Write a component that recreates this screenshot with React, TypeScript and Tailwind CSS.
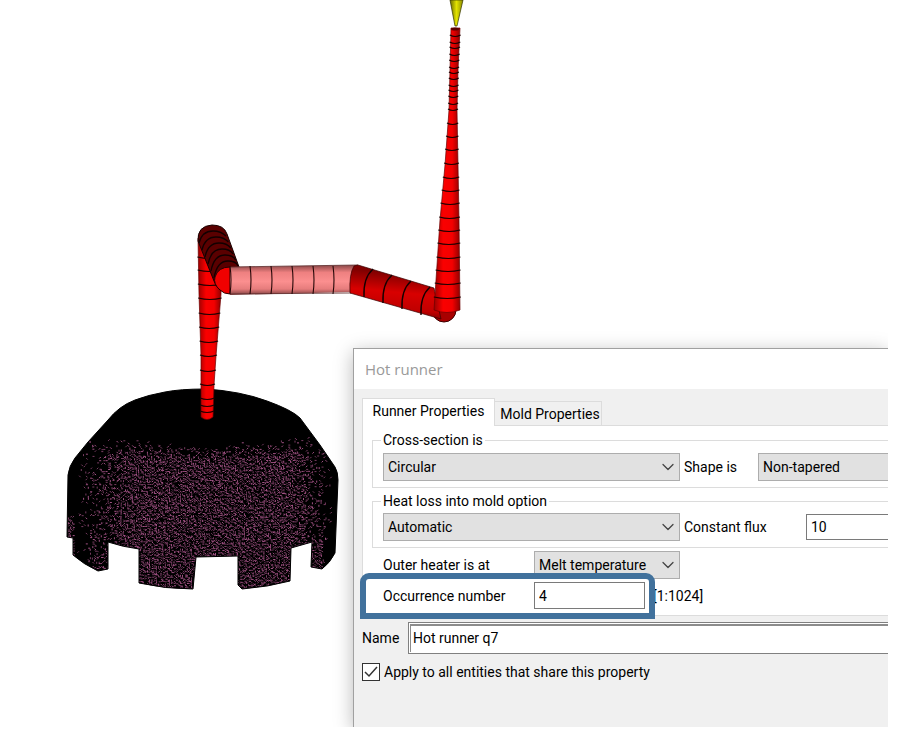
import React from "react";
import { FiChevronDown } from "react-icons/fi";

type Ring = [number, number, number];

// [y, left x, right x] of the outline, top to bottom
const sprueOutline: Ring[] = [
  [28, 451, 460],
  [70, 450, 458],
  [110, 449, 457],
  [165, 445, 458],
  [220, 440, 459],
  [310, 434, 460],
];
const sprueRings = [
  36, 43, 48, 55, 61, 68, 73, 79, 86, 91, 97, 104, 110, 124, 137, 150, 164, 178,
  191, 204, 218, 231, 244, 258, 271, 284, 298,
];

const dropOutline: Ring[] = [
  [238, 198, 221],
  [294, 199, 221],
  [356, 201, 216],
  [385, 201, 214],
  [417, 201, 213],
];
const dropRings = [
  258, 271, 285, 299, 314, 328, 342, 356, 371, 385, 399, 406, 412,
];

const edgesAt = (outline: Ring[], y: number) => {
  let i = 0;
  while (i < outline.length - 2 && y > outline[i + 1][0]) i++;
  const [y0, l0, r0] = outline[i];
  const [y1, l1, r1] = outline[i + 1];
  const t = (y - y0) / (y1 - y0);
  return [l0 + (l1 - l0) * t, r0 + (r1 - r0) * t];
};

const Pipe = ({ outline, rings }: { outline: Ring[]; rings: number[] }) => {
  const left = outline.map(([y, l]) => `${l},${y}`);
  const right = outline.map(([y, , r]) => `${r},${y}`).reverse();
  const [y, l, r] = outline[outline.length - 1];
  return (
    <g>
      <path
        d={`M${left.join(" L")} Q${(l + r) / 2},${y + 5} ${right.join(" L")}Z`}
        fill="url(#red)"
        stroke="#6b0000"
        strokeWidth="0.7"
      />
      {rings.map((ry) => {
        const [a, b] = edgesAt(outline, ry);
        return (
          <path
            key={ry}
            d={`M${a - 1},${ry - 1} Q${(a + b) / 2},${ry + 2} ${b + 1},${ry - 1}`}
            fill="none"
            stroke="#1c0000"
            strokeWidth="1.1"
          />
        );
      })}
    </g>
  );
};

const bodyPath =
  "M205,389 Q180,389 165,392 Q148,395 135,400 Q119,406 108,420 L88,442 L75,458 Q69,466 68,475 L67,537 L73,538 L73,555 Q83,564 98,571 L108,569 L108,542 Q123,547 139,549 L139,583 Q165,589 193,589 L196,557 L238,556 L238,585 L242,589 Q268,587 290,581 L291,548 L312,542 L311,567 L322,569 Q330,563 335,553 L338,480 Q338,472 335,467 L320,445 L300,418 Q292,410 267,401 Q240,391 205,389Z";

// Surface mesh: short strokes on a fine grid, thinning out to the rim
const buildMesh = () => {
  let seed = 7;
  const rand = () => {
    seed = (seed * 16807) % 2147483647;
    return seed / 2147483647;
  };
  const dirs = [
    [2, 0],
    [0, 2],
    [1.5, 1.5],
    [1.5, -1.5],
  ];
  let bright = "";
  let dim = "";
  for (let y = 436; y < 590; y += 2.2) {
    for (let x = 68; x < 337; x += 2.2) {
      const u = (x - 203) / 135;
      const top = 450 - 10 * Math.abs(u);
      let density = Math.min(1, (y - top + 6) / 18);
      const side = x < 203 ? (x - 74) / 56 : (332 - x) / 42;
      density *= Math.max(0, Math.min(1, side));
      if ((x < 73 && y > 517) || (x > 312 && x < 321 && y > 538)) density = 0.9;
      const roll = rand();
      const [dx, dy] = dirs[Math.floor(rand() * 4)];
      const jx = x + rand() * 0.6;
      const jy = y + rand() * 0.6;
      if (roll > density * 0.95) continue;
      const piece = `M${jx.toFixed(1)},${jy.toFixed(1)}l${dx},${dy}`;
      if (rand() < 0.45) bright += piece;
      else dim += piece;
    }
  }
  return { bright, dim };
};

const mesh = buildMesh();

const Model = () => (
  <svg
    className="absolute left-0 top-0"
    width="480"
    height="600"
    viewBox="0 0 480 600"
    role="img"
    aria-label="Runner system and meshed part"
  >
    <defs>
      <linearGradient id="red">
        <stop offset="0" stopColor="#980000" />
        <stop offset="0.35" stopColor="#fa0000" />
        <stop offset="0.7" stopColor="#f40000" />
        <stop offset="1" stopColor="#900000" />
      </linearGradient>
      <linearGradient id="pink" x2="0" y2="1">
        <stop offset="0" stopColor="#8b4848" />
        <stop offset="0.25" stopColor="#ee8080" />
        <stop offset="0.55" stopColor="#fb8f8f" />
        <stop offset="0.8" stopColor="#e67c7c" />
        <stop offset="1" stopColor="#7d4040" />
      </linearGradient>
      <linearGradient id="arm" x1="0.55" y1="0" x2="0.4" y2="1">
        <stop offset="0.15" stopColor="#800000" />
        <stop offset="0.5" stopColor="#d80000" />
        <stop offset="0.8" stopColor="#c00000" />
        <stop offset="1" stopColor="#600000" />
      </linearGradient>
      <linearGradient id="cone">
        <stop offset="0" stopColor="#6c6c00" />
        <stop offset="0.5" stopColor="#e2e200" />
        <stop offset="1" stopColor="#8a8a00" />
      </linearGradient>
      <clipPath id="body">
        <path d={bodyPath} />
      </clipPath>
    </defs>

    <path d={bodyPath} fill="#000" />
    <g clipPath="url(#body)" fill="none" strokeWidth="0.9">
      <path d={mesh.dim} stroke="#84436c" />
      <path d={mesh.bright} stroke="#b25a92" />
    </g>
    <path d={bodyPath} fill="none" stroke="#000" />

    <Pipe outline={dropOutline} rings={dropRings} />

    {/* elbow going back */}
    <path
      d="M198,241 Q197,226 212,225 Q224,225 227,234 L239,267 L229,292 Q218,292 214,281Z"
      fill="#5a0000"
      stroke="#160000"
    />
    {[0, 1, 2, 3, 4, 5].map((i) => (
      <path
        key={i}
        d={`M${199 + i * 3},${243 + i * 7} Q${202 + i * 3},${231 + i * 6} ${213 + i * 3},${231 + i * 6} Q${221 + i * 3},${231 + i * 6} ${226 + i * 2.4},${236 + i * 6}`}
        fill="none"
        stroke="#120000"
        strokeWidth="1.3"
      />
    ))}
    <path
      d="M230,267 Q218,267 215,277 Q213,284 220,290 Q224,294 230,294Z"
      fill="#f00000"
      stroke="#2a0000"
    />

    <path d="M230,267 L358,265 L352,292 L230,295Z" fill="url(#pink)" />
    <path
      d="M230,267 L358,265 M230,294 L351,293"
      stroke="#5a2a2a"
      strokeWidth="0.8"
    />
    {[230, 250, 271, 292, 313, 333].map((x) => (
      <path
        key={x}
        d={`M${x},266 Q${x + 2},280 ${x},294`}
        fill="none"
        stroke="#260808"
        strokeWidth="1.1"
      />
    ))}

    <circle cx="444" cy="310" r="12" fill="#a80000" stroke="#3a0000" />
    <path
      d="M350,293 Q349,274 354,266 L358,265 L434,288 L441,319Z"
      fill="url(#arm)"
      stroke="#3a0000"
      strokeWidth="0.7"
    />
    {[
      [372, 270],
      [391, 276],
      [410, 282],
      [429, 288],
    ].map(([x, y]) => (
      <path
        key={x}
        d={`M${x + 1},${y - 1} Q${x - 9},${y + 8} ${x - 8},${y + 27}`}
        fill="none"
        stroke="#150000"
        strokeWidth="1.4"
      />
    ))}

    <Pipe outline={sprueOutline} rings={sprueRings} />
    <ellipse cx="455" cy="29" rx="4" ry="1.5" fill="#5a0000" />
    <path d="M450,0 L463,0 L457,26 L455,26Z" fill="url(#cone)" stroke="#333300" strokeWidth="0.7" />
  </svg>
);

type SelectProps = {
  id: string;
  value: string;
  className: string;
};

const Select = ({ id, value, className }: SelectProps) => (
  <div className={`relative h-7 shrink-0 ${className}`}>
    <select
      id={id}
      defaultValue={value}
      className="block h-full w-full appearance-none border border-[#adadad] bg-[#e1e1e1] pl-1 text-sm text-black"
    >
      <option>{value}</option>
    </select>
    <FiChevronDown
      size={20}
      strokeWidth={1.5}
      className="pointer-events-none absolute right-[2px] top-1 text-[#444]"
    />
  </div>
);

const fieldStyle = "shrink-0 border border-[#7a7a7a] bg-white pl-1 text-sm";
const groupStyle = "min-w-0 border border-r-0 border-[#dcdcdc]";
const legendStyle = "ml-2 h-4 px-[2px] leading-4";

const HotRunnerDialog = () => (
  <section className="relative h-full overflow-hidden border-l border-t border-[#a0a0a0] bg-[#f0f0f0] pb-[46px] text-sm leading-4 text-black">
    <h1 className="flex h-10 items-center bg-white pl-[11px] font-['Open_Sans',sans-serif] text-[15px] text-[#999]">
      Hot runner
    </h1>

    <div className="pl-2">
      <div role="tablist" className="flex items-end pt-[9px]">
        <button
          role="tab"
          aria-selected="true"
          className="relative -mb-px h-7 w-[133px] border border-b-0 border-[#dcdcdc] bg-white pb-1 text-center"
        >
          Runner Properties
        </button>
        <button
          role="tab"
          aria-selected="false"
          className="h-[24px] w-[107px] border border-b-0 border-l-0 border-[#dcdcdc] pl-1 text-center"
        >
          Mold Properties
        </button>
      </div>

      <div
        role="tabpanel"
        className="border border-r-0 border-[#dcdcdc] bg-white pb-[6px] pl-[9px] pt-[6px]"
      >
        <fieldset className={groupStyle}>
          <legend className={legendStyle}>Cross-section is</legend>
          <div className="flex items-center pb-[6px] pl-[10px] pt-[5px]">
            <Select id="section" value="Circular" className="w-[297px]" />
            <label htmlFor="shape" className="w-[78px] shrink-0 pl-1">
              Shape is
            </label>
            <Select id="shape" value="Non-tapered" className="w-[180px]" />
          </div>
        </fieldset>

        <fieldset className={`mt-[5px] ${groupStyle}`}>
          <legend className={legendStyle}>Heat loss into mold option</legend>
          <div className="flex items-center pb-[6px] pl-[10px] pt-1">
            <Select id="heat" value="Automatic" className="w-[297px]" />
            <label htmlFor="flux" className="w-[126px] shrink-0 pl-1">
              Constant flux
            </label>
            <input id="flux" defaultValue="10" className={`h-[26px] w-[180px] ${fieldStyle}`} />
          </div>
        </fieldset>

        <div className="mt-[3px] flex items-center pl-[11px]">
          <label htmlFor="heater" className="w-[151px] shrink-0">
            Outer heater is at
          </label>
          <Select id="heater" value="Melt temperature" className="w-[146px]" />
        </div>

        <div className="relative mt-[3px] flex items-center pl-[11px]">
          <label htmlFor="occurrence" className="w-[151px] shrink-0">
            Occurrence number
          </label>
          <input id="occurrence" defaultValue="4" className={`h-[27px] w-[111px] ${fieldStyle}`} />
          <span className="pl-2">[1:1024]</span>
          <div className="pointer-events-none absolute -bottom-[10px] -left-3 -top-[9px] w-[295px] rounded-t-[9px] border-[6px] border-[#41719c]" />
        </div>
      </div>
    </div>

    <div className="flex items-center pl-2 pt-[6px]">
      <label htmlFor="name" className="w-[46px] shrink-0">
        Name
      </label>
      <div className="h-8 grow border border-r-0 border-[#808080] bg-white p-px pr-0">
        <input
          id="name"
          defaultValue="Hot runner q7"
          className="block h-full w-full border-l border-t-2 border-[#8c8c8c] pb-[3px] pl-[2px] text-sm"
        />
      </div>
    </div>

    <label className="flex items-center gap-1 pl-2 pt-[9px]">
      <span className="relative size-[18px]">
        <input
          type="checkbox"
          defaultChecked
          className="peer block size-full appearance-none border border-[#333] bg-white"
        />
        <svg
          viewBox="0 0 18 18"
          className="pointer-events-none absolute inset-0 hidden peer-checked:block"
        >
          <path d="M3 9l4 4 8-9" fill="none" stroke="#333" strokeWidth="1.5" />
        </svg>
      </span>
      Apply to all entities that share this property
    </label>
  </section>
);

const App = () => {
  return (
    <main className="min-h-screen bg-white pb-4 pr-[19px] font-[Roboto,sans-serif]">
      <div className="relative overflow-hidden pl-[353px] pt-[348px]">
        <Model />
        <div className="relative shadow-[0_4px_18px_rgba(0,0,0,0.28)]">
          <HotRunnerDialog />
        </div>
      </div>
    </main>
  );
};

export default App;
